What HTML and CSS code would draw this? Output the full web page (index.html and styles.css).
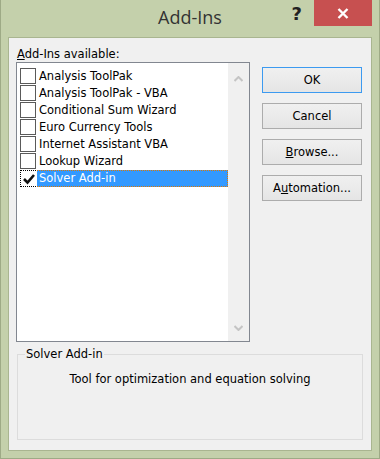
FILE: index.html
```html
<!DOCTYPE html>
<html lang="en">
<head>
    <meta charset="UTF-8">
    <title>Add-Ins</title>
    <link rel="stylesheet" href="styles.css">
</head>
<body>
    <div class="window">
        <div class="titlebar">
            <div></div>
            <div class="title">Add-Ins</div>
            <div class="controls">
                <span class="help">?</span>
                <span class="close">
                    <svg width="12" height="11" viewBox="0 0 12 11">
                        <path d="M1.5 1 L10.5 10 M10.5 1 L1.5 10" stroke="#fff" stroke-width="2.4"/>
                    </svg>
                </span>
            </div>
        </div>

        <div class="client">
            <div class="main">
                <div class="left">
                    <div class="label"><u>A</u>dd-Ins available:</div>
                    <div class="listbox">
                        <ul class="items">
                            <li class="item"><span class="box"></span><span class="text">Analysis ToolPak</span></li>
                            <li class="item"><span class="box"></span><span class="text">Analysis ToolPak - VBA</span></li>
                            <li class="item"><span class="box"></span><span class="text">Conditional Sum Wizard</span></li>
                            <li class="item"><span class="box"></span><span class="text">Euro Currency Tools</span></li>
                            <li class="item"><span class="box"></span><span class="text">Internet Assistant VBA</span></li>
                            <li class="item"><span class="box"></span><span class="text">Lookup Wizard</span></li>
                            <li class="item selected">
                                <span class="box checked">
                                    <svg width="14" height="14" viewBox="0 0 14 14">
                                        <path d="M2 7 L5.5 10.5 L12 3" fill="none" stroke="#111" stroke-width="2.6"/>
                                    </svg>
                                </span>
                                <span class="text">Solver Add-in</span>
                            </li>
                        </ul>
                        <div class="scrollbar">
                            <svg width="9" height="6" viewBox="0 0 9 6">
                                <path d="M0.5 5 L4.5 1 L8.5 5" fill="none" stroke="#c4c4c4" stroke-width="2"/>
                            </svg>
                            <svg width="9" height="6" viewBox="0 0 9 6">
                                <path d="M0.5 1 L4.5 5 L8.5 1" fill="none" stroke="#c4c4c4" stroke-width="2"/>
                            </svg>
                        </div>
                    </div>
                </div>

                <div class="buttons">
                    <button class="btn default">OK</button>
                    <button class="btn">Cancel</button>
                    <button class="btn"><u>B</u>rowse...</button>
                    <button class="btn">A<u>u</u>tomation...</button>
                </div>
            </div>

            <fieldset class="group">
                <legend>Solver Add-in</legend>
                <p class="description">Tool for optimization and equation solving</p>
            </fieldset>
        </div>
    </div>
</body>
</html>
```

FILE: styles.css
```css
* {
    margin: 0;
    padding: 0;
    box-sizing: border-box;
}

body {
    background: #c4d0ab;
    font-family: 'DejaVu Sans', Tahoma, sans-serif;
    font-size: 11.5px;
    color: #000;
}

.window {
    width: 380px;
    height: 459px;
    background: #c4d0ab;
    border: 1px solid #9eaa86;
    border-top: none;
    padding: 0 7px 7px;
    display: flex;
    flex-direction: column;
}

.titlebar {
    height: 37px;
    display: grid;
    grid-template-columns: 1fr auto 1fr;
    align-items: start;
}

.title {
    font-family: 'Open Sans', sans-serif;
    font-size: 18px;
    color: #333;
    padding-top: 5px;
    line-height: 24px;
}

.controls {
    display: flex;
    justify-content: flex-end;
    align-items: flex-start;
}

.help {
    font-family: 'DejaVu Sans', sans-serif;
    font-weight: bold;
    font-size: 18px;
    line-height: 20px;
    color: #222;
    margin-top: 4px;
    margin-right: 12px;
}

.close {
    width: 58px;
    height: 26px;
    background: #c75050;
    display: flex;
    align-items: center;
    justify-content: center;
}

.client {
    flex: 1;
    background: #f0f0f0;
    border: 1px solid #a9b590;
    padding: 9px 9px 0 7px;
}

.main {
    display: flex;
    gap: 12px;
}

.label {
    line-height: 14px;
    padding-left: 1px;
    margin-bottom: 1px;
}

.listbox {
    width: 234px;
    height: 280px;
    border: 1px solid #828790;
    background: #fff;
    display: flex;
}

.items {
    list-style: none;
    flex: 1;
    padding: 5px 0 0 3px;
}

.item {
    display: flex;
    height: 17px;
    line-height: 17px;
}

.box {
    width: 16px;
    height: 16px;
    border: 1px solid #5a5a5a;
    background: #fff;
    display: flex;
    align-items: center;
    justify-content: center;
}

.text {
    padding-left: 3px;
    flex: 1;
    white-space: nowrap;
}

.selected .box {
    height: 17px;
    border: 1px dotted #000;
    border-right: none;
}

.selected .text {
    background: #3399ff;
    color: #fff;
    border: 1px dotted #e07800;
    border-left: none;
    line-height: 15px;
    margin-left: 1px;
    padding-left: 2px;
}

.scrollbar {
    width: 21px;
    background: #f0f0f0;
    display: flex;
    flex-direction: column;
    justify-content: space-between;
    align-items: center;
    padding: 13px 0 10px;
}

.buttons {
    display: flex;
    flex-direction: column;
    gap: 10px;
    padding-top: 20px;
}

.btn {
    width: 100px;
    height: 26px;
    font-family: inherit;
    font-size: 11.5px;
    color: #000;
    background: linear-gradient(#f0f0f0, #e5e5e5);
    border: 1px solid #acacac;
}

.btn.default {
    border-color: #3c9af0;
}

.group {
    margin: 5px 0 0 1px;
    width: 346px;
    border: 1px solid #dcdcdc;
    padding: 0;
}

.group legend {
    margin-left: 7px;
    padding: 0 1px;
    line-height: 14px;
}

.description {
    text-align: center;
    line-height: 14px;
    margin: 11px 0 53px;
}
```
